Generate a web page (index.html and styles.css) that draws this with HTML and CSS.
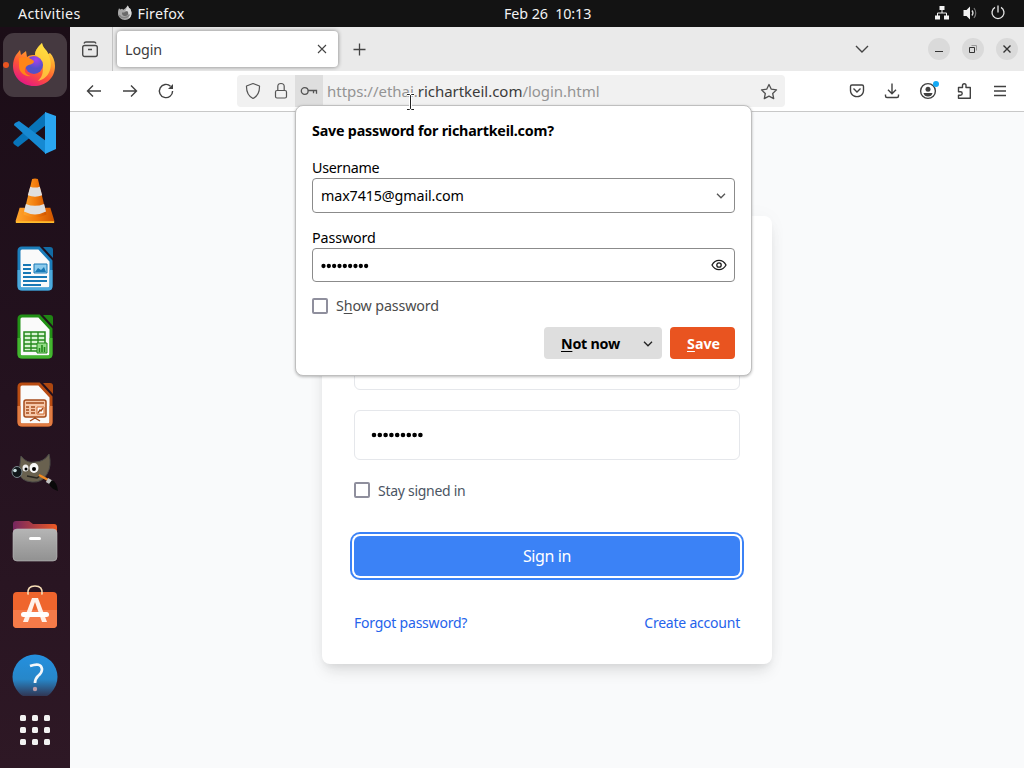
FILE: index.html
```html
<!DOCTYPE html>
<html lang="en">
<head>
<meta charset="utf-8">
<title>Login</title>
<link rel="stylesheet" href="styles.css">
</head>
<body>
<div class="desktop">
  <header class="topbar">
    <div class="top-left">
      <span class="t-activities">Activities</span>
      <svg class="mini-fox" width="16" height="16" viewBox="0 0 16 16"><path d="M2 3.2 3.4 4.6 5 3.8 6.3 4.7 8.4 3.2 10.8.6 12 3l1.5 1 1 3.5c.3 4.5-2.7 7.4-6.5 7.4S1 12 1 8.2c0-2 .4-3.500 1-5z" fill="#a8a8a8"/><path d="M10.800.6 12 3l1.500 1 1 3.500c.2 3-1 5-3 6.300 1-4 0-6-3.100-8z" fill="#d8d8d8"/><path d="M5 7.500c2.500.5 3-1 5-1.500 2 1 1.500 5-1.500 5S5 9.500 5 7.500z" fill="#6a6a6a"/><path d="M2.200 10c2 3.800 8 4 10.300-.5" fill="none" stroke="#858585" stroke-width="1.500"/></svg>
      <span class="t-firefox">Firefox</span>
    </div>
    <span class="t-clock">Feb 26&nbsp; 10:13</span>
    <div class="top-right">
      <svg width="16" height="16" viewBox="0 0 16 16" fill="#f2f2f2"><path d="M5.500 1h5v4h-5zM1 10.500h5v4H1zM10 10.500h5v4h-5z"/><path d="M8 5v3M3.500 11V8h9v3" fill="none" stroke="#f2f2f2"/></svg>
      <svg width="16" height="16" viewBox="0 0 16 16" fill="none"><path d="M1.500 5h3L8 1.500v13L4.500 11h-3z" fill="#f2f2f2"/><path d="M10 5.500q2 2.500 0 5" stroke="#ddd" stroke-width="1.300"/><path d="M12 3q3.500 5 0 10" stroke="#777" stroke-width="1.200"/></svg>
      <svg width="16" height="16" viewBox="0 0 16 16" fill="none" stroke="#e8e8e8" stroke-width="1.300"><path d="M5 2.400a6 6 0 1 0 6 0M8 .5v7"/></svg>
    </div>
  </header>
  <div class="workspace">
    <nav class="dock">
      <div class="dock-list">
        <div class="dock-item"><div class="dock-active"><i class="running"></i>
          <svg width="44" height="46" viewBox="0 0 44 46"><defs><linearGradient id="ff" x1=".85" y1="0" x2=".3" y2="1"><stop offset="0" stop-color="#fff44f"/><stop offset=".35" stop-color="#ffa22c"/><stop offset=".65" stop-color="#ff5436"/><stop offset="1" stop-color="#e31587"/></linearGradient><radialGradient id="fp" cx=".6" cy=".2"><stop offset="0" stop-color="#a940ef"/><stop offset="1" stop-color="#5450c8"/></radialGradient></defs>
          <path d="M3 15 7 10l1 5 5-4 1 6c3-2 5-2 8-2 0-5 4-9 7-12 1 6 5 6 6 11l2-1c3 3 5 8 5 13 0 12-9 20-21 20S0 37 0 26c0-4 1-8 3-11z" fill="url(#ff)"/><path d="M29 3c1 6 5 6 7 13 5 12-1 23-11 25 8-7 6-21-3-26 0-5 3-8 7-12z" fill="#ffdf40" opacity=".75"/><circle cx="21" cy="25" r="9" fill="url(#fp)"/><path d="M6 18c5-2 10-1 15 3 0 4-6 3-8 6-3 4 0 8 5 9-7 1-12-4-12-10z" fill="#ff8518"/></svg>
        </div></div>
        <div class="dock-item"><svg width="44" height="44" viewBox="0 0 44 44"><path d="M1 30q-2 2 1 4l3 2L33 14V1L1 30z" fill="#0874b9"/><path d="m2 12 4-2 27 20v13L2 15q-2-1 0-3z" fill="#1689d2"/><path d="M32 1 43 5v33l-11 5z" fill="#2aa6f1"/></svg></div>
        <div class="dock-item"><svg width="42" height="46" viewBox="0 0 42 48"><defs><linearGradient id="vc"><stop stop-color="#ffa52d"/><stop offset=".55" stop-color="#f17b0c"/><stop offset="1" stop-color="#cf5500"/></linearGradient></defs><path d="M5 31h32l4 13v2H1v-2z" fill="url(#vc)"/><path d="M1 45h40v2H1z" fill="#ffbc2e"/><path d="M18 1q3-1 6 0l9 37q-12 6-24 0z" fill="url(#vc)"/><path d="m16 9-2.500 9q7.500 3 15 0L26 9q-5 2-10 0zM11.500 27 9.500 35q11.500 6 23 0L30.500 27q-9.500 4-19 0z" fill="#e0e0e0"/></svg></div>
        <div class="dock-item"><svg width="38" height="46" viewBox="0 0 38 46"><path d="M6 2h17l12 13v25q0 3-3 3H6q-3 0-3-3V5q0-3 3-3z" fill="#fafafa" stroke="#1b7dba" stroke-width="3"/><path d="M3 24v16q0 3 3 3h26q3 0 3-3V24" fill="none" stroke="#4ca9dc" stroke-width="3"/><path d="M27 1h7q3 0 3 3v8z" fill="#126ca5"/><path d="M7 19h8M7 23h8M7 27h8M7 31h24M7 35h24M7 39h18" stroke="#1878b5" stroke-width="2"/><path d="M18 18h13v9H18z" fill="#8bcbed" stroke="#1878b5"/><path d="m19 26 3-4 3 2 3-3 2 5z" fill="#1878b5"/></svg></div>
        <div class="dock-item"><svg width="38" height="46" viewBox="0 0 38 46"><path d="M6 2h17l12 13v25q0 3-3 3H6q-3 0-3-3V5q0-3 3-3z" fill="#fafafa" stroke="#229116" stroke-width="3"/><path d="M3 24v16q0 3 3 3h26q3 0 3-3V24" fill="none" stroke="#43b52f" stroke-width="3"/><path d="M27 1h7q3 0 3 3v8z" fill="#208414"/><path d="M8 18h21v19H8z" fill="#d8f4d2" stroke="#23881b" stroke-width="1.500"/><path d="M15 18v19M22 18v19M8 22h21M8 26h21M8 30h21M8 34h21" stroke="#23881b" stroke-width="1.300"/><path d="M21 29h10v10H21z" fill="#90dc84" stroke="#23881b"/><path d="M23.500 38v-4M26 38v-7M28.500 38v-5" stroke="#23881b" stroke-width="1.600"/></svg></div>
        <div class="dock-item"><svg width="38" height="46" viewBox="0 0 38 46"><path d="M6 2h17l12 13v25q0 3-3 3H6q-3 0-3-3V5q0-3 3-3z" fill="#fafafa" stroke="#b94c12" stroke-width="3"/><path d="M3 24v16q0 3 3 3h26q3 0 3-3V24" fill="none" stroke="#e17c43" stroke-width="3"/><path d="M27 1h7q3 0 3 3v8z" fill="#ad4710"/><rect x="8" y="18" width="22" height="17" rx="2" fill="#f6c8a9" stroke="#a54b1b" stroke-width="1.500"/><path d="M10 21h18M10 25h3M10 28h3M10 31h3M15 25h4M15 28h4M15 31h4" stroke="#a54b1b" stroke-width="1.500"/><path d="M21 25h7v7h-7z" fill="#fff" stroke="#cf662b"/><path d="m22 31 2-3 1 1 2-3M19 35v2m-5 2 5-3 5 3" fill="none" stroke="#a54b1b" stroke-width="1.400"/></svg></div>
        <div class="dock-item"><svg width="48" height="44" viewBox="0 0 48 44"><path d="M10 5q6 8 14 6 9 0 14-8 3 12-2 20-5 9-15 8-12-1-13-10z" fill="#69614f" stroke="#4b4a47"/><ellipse cx="6" cy="21" rx="5" ry="5.500" fill="#101619" stroke="#79868c"/><circle cx="4" cy="19.500" r="1.800" fill="#cce0e2"/><ellipse cx="14.500" cy="17" rx="3" ry="3.500" fill="#eee"/><ellipse cx="23" cy="17" rx="4.500" ry="5" fill="#f7f7f7"/><circle cx="15" cy="18" r="1.500"/><circle cx="23" cy="18" r="2"/><path d="m16 25 10 2 4-3" fill="none" stroke="#292721" stroke-width="1.500"/><path d="m28 24 11 6" stroke="#f08a22" stroke-width="2.500"/><path d="m36 29 5 3" stroke="#c2c2c2" stroke-width="4.500"/><path d="M41 29q5 2 6 11-7-2-9-7z" fill="#090909"/></svg></div>
        <div class="dock-item"><svg width="46" height="42" viewBox="0 0 46 42"><defs><linearGradient id="fo"><stop stop-color="#75265f"/><stop offset="1" stop-color="#ed5a24"/></linearGradient><linearGradient id="fg" x2="0" y2="1"><stop stop-color="#b5b5b5"/><stop offset="1" stop-color="#919191"/></linearGradient></defs><path d="M1 12V4q0-3 3-3h13l4 3h21q3 0 3 3v8z" fill="url(#fo)"/><rect x="1" y="9" width="44" height="32" rx="4" fill="url(#fg)" stroke="#bcbcbc" stroke-width=".6"/><rect x="17" y="17" width="12" height="3" rx="1.500" fill="#fff"/></svg></div>
        <div class="dock-item store"><svg width="46" height="44" viewBox="0 0 46 44"><rect x="1" y="7" width="44" height="36" rx="4" fill="#ef652d"/><path d="M1 25h44v14q0 4-4 4H5q-4 0-4-4z" fill="#f57b49"/><path d="M16 9Q15 1 23 1t7 8" fill="none" stroke="#f9dfb7" stroke-width="1.700" stroke-linecap="round"/><path d="M11 37 20 13h6l9 24h-5l-7-20-7 20z" fill="#fff1e9"/><rect x="9" y="27" width="28" height="5" rx="2.500" fill="#fff"/></svg></div>
        <div class="dock-item"><svg width="46" height="46" viewBox="0 0 46 46"><defs><linearGradient id="he" x2="0" y2="1"><stop stop-color="#2490df"/><stop offset=".55" stop-color="#2787c9"/><stop offset=".95" stop-color="#31304b"/></linearGradient></defs><circle cx="23" cy="23" r="22.500" fill="url(#he)"/><path d="M18 12q11-4 12 3 0 4-4 7-3 3-3 7" fill="none" stroke="#f4f7fa" stroke-width="2.700"/><circle cx="23" cy="35" r="2.200" fill="#bc9ba6"/></svg></div>
      </div>
      <div class="apps"><i></i><i></i><i></i><i></i><i></i><i></i><i></i><i></i><i></i></div>
    </nav>
    <main class="browser">
      <div class="tabbar">
        <div class="view"><svg width="18" height="18" viewBox="0 0 18 18" fill="none" stroke="#4a4a4a" stroke-width="1.400"><rect x="1.700" y="5.500" width="14.600" height="11" rx="2"/><path d="M3 3.500Q3.500 2 5 2h8q1.500 0 2 1.500M7 9.500h4"/></svg></div>
        <div class="tab"><span class="t-login">Login</span><svg width="10" height="10" viewBox="0 0 10 10" stroke="#444" stroke-width="1.100"><path d="m1 1 8 8M9 1 1 9"/></svg></div>
        <svg class="newtab" width="13" height="13" viewBox="0 0 13 13" stroke="#444" stroke-width="1.300"><path d="M6.500.5v12M.5 6.500h12"/></svg>
        <svg class="alltabs" width="14" height="8" viewBox="0 0 14 8" fill="none" stroke="#444" stroke-width="1.400"><path d="m1 1 6 6 6-6"/></svg>
        <div class="winbtns">
          <b><svg width="10" height="10" viewBox="0 0 10 10" stroke="#333"><path d="M1 7.500h8"/></svg></b>
          <b><svg width="10" height="10" viewBox="0 0 10 10" fill="none" stroke="#333"><path d="M1.500 3.500h5v5h-5z"/><path d="M3.500 1.500h5v5" stroke="#999"/></svg></b>
          <b><svg width="10" height="10" viewBox="0 0 10 10" stroke="#333" stroke-width="1.400"><path d="m1.500 1.500 7 7M8.500 1.500l-7 7"/></svg></b>
        </div>
      </div>
      <div class="toolbar">
        <div class="navbtns">
          <svg width="16" height="16" viewBox="0 0 16 16" fill="none" stroke="#414141" stroke-width="1.400"><path d="M15 8H1.500M7 2.500 1.500 8 7 13.500"/></svg>
          <svg width="16" height="16" viewBox="0 0 16 16" fill="none" stroke="#414141" stroke-width="1.400"><path d="M1 8h13.500M9 2.500 14.500 8 9 13.500"/></svg>
          <svg width="16" height="16" viewBox="0 0 16 16" fill="none" stroke="#414141" stroke-width="1.400"><path d="M12.500 3.200A6.600 6.600 0 1 0 14.600 8"/><path d="M15 1v5h-5z" fill="#414141" stroke="none"/></svg>
        </div>
        <div class="urlbar">
          <svg class="shield" width="16" height="18" viewBox="0 0 16 18" fill="none" stroke="#555" stroke-width="1.200"><path d="M8 1.500 14.500 4q.3 9-6.500 12.500Q1.200 13 1.500 4z" stroke-linejoin="round"/></svg>
          <svg class="lock" width="14" height="18" viewBox="0 0 14 18" fill="none" stroke="#555" stroke-width="1.200"><rect x="1.500" y="8.500" width="11" height="7.500" rx="1.500"/><path d="M3.800 8V4.500q0-3 3.200-3t3.200 3V8"/></svg>
          <div class="keybox"><svg width="18" height="12" viewBox="0 0 18 12" fill="none" stroke="#555" stroke-width="1.300"><circle cx="4.700" cy="6" r="3.400"/><path d="M8 5.500h8.500v3.300M13.500 5.500v2.700"/></svg></div>
          <div class="url"><span class="u1">https://ethai.</span><span class="u2">richartkeil.com</span><span class="u3">/login.html</span></div>
          <svg class="star" width="18" height="17" viewBox="0 0 18 17" fill="none" stroke="#505050" stroke-width="1.300"><path d="m9 1.500 2.300 4.700 5.200.7-3.800 3.600 1 5.100L9 13.200l-4.700 2.400 1-5.100L1.500 6.900l5.200-.7z" stroke-linejoin="round"/></svg>
        </div>
        <div class="tools">
          <svg width="16" height="16" viewBox="0 0 16 16" fill="none" stroke="#414141" stroke-width="1.400"><path d="M3 2h10q1.500 0 1.500 1.500V7.500q0 3.500-3.500 5.500-3 1.300-6 0Q1.500 11 1.500 7.500V3.500Q1.500 2 3 2z"/><path d="m4.500 5.500 3.500 3.500 3.500-3.500"/></svg>
          <svg width="16" height="16" viewBox="0 0 16 16" fill="none" stroke="#414141" stroke-width="1.400"><path d="M8 .5v10M4 6.700l4 4 4-4M1.500 11.500V13q0 1.500 1.500 1.500h10q1.500 0 1.500-1.500v-1.500"/></svg>
          <svg class="account" width="20" height="20" viewBox="0 0 20 20"><circle cx="10" cy="10" r="7.400" fill="none" stroke="#414141" stroke-width="1.400"/><circle cx="10" cy="8.300" r="2.500" fill="#414141"/><path d="M5.500 12h9q-.8 3.500-4.500 3.500T5.500 12z" fill="#414141"/><circle cx="18" cy="3" r="3" fill="#15aaf5"/></svg>
          <svg width="16" height="18" viewBox="0 0 16 18" fill="none" stroke="#414141" stroke-width="1.400"><path d="M2.500 5.500h4V3.500q0-1.800 1.800-1.800T10 3.500v2h4.300v10.700H2.500v-3h2q1.700 0 1.700-1.700T4.500 9.800h-2z" stroke-linejoin="round"/></svg>
          <svg width="12" height="12" viewBox="0 0 12 12" stroke="#414141" stroke-width="1.300"><path d="M0 1.500h12M0 6h12M0 10.500h12"/></svg>
        </div>
      </div>
      <div class="page">
        <section class="card">
          <div class="field"></div>
          <div class="field pass"><svg width="52" height="6" viewBox="0 0 52 6"><path class="dots-big" d="M3 3h46.500"/></svg></div>
          <label class="stay"><i class="box"></i><span class="t-stay">Stay signed in</span></label>
          <div class="signin"><span class="t-sign">Sign in</span></div>
          <div class="links"><a class="t-forgot">Forgot password?</a><a class="t-create">Create account</a></div>
        </section>
      </div>
    </main>
  </div>
  <section class="popup">
    <h1 class="t-title">Save password for richartkeil.com?</h1>
    <div class="label"><span class="t-user">Username</span></div>
    <div class="input user"><span class="t-email">max7415@gmail.com</span><svg width="10" height="6" viewBox="0 0 10 6" fill="none" stroke="#555" stroke-width="1.300"><path d="m1 .8 4 4 4-4"/></svg></div>
    <div class="label second"><span class="t-pass">Password</span></div>
    <div class="input pw"><svg class="pwdots" width="48" height="6" viewBox="0 0 48 6"><path class="dots-small" d="M2.500 3h43"/></svg><svg width="16" height="12" viewBox="0 0 16 12" fill="none" stroke="#1c1c1c" stroke-width="1.300"><path d="M1 6q2.500-4.700 7-4.700T15 6q-2.500 4.700-7 4.700T1 6z"/><circle cx="8" cy="6" r="2.200"/></svg></div>
    <label class="show"><i class="box"></i><span class="t-show">S<u>h</u>ow password</span></label>
    <div class="actions">
      <div class="notnow"><span class="t-not"><u>N</u>ot now</span><svg width="10" height="6" viewBox="0 0 10 6" fill="none" stroke="#222" stroke-width="1.300"><path d="m1 .8 4 4 4-4"/></svg></div>
      <div class="save"><span class="t-save"><u>S</u>ave</span></div>
    </div>
  </section>
  <svg class="cursor" width="9" height="18" viewBox="0 0 9 18" fill="none"><path d="M1 1.500h2.500l1 1 1-1H8M4.500 2.500v13M1 16.500h2.500l1-1 1 1H8" stroke="#fff" stroke-width="3"/><path d="M1 1.500h2.500l1 1 1-1H8M4.500 2.500v13M1 16.500h2.500l1-1 1 1H8" stroke="#222"/></svg>
</div>
</body>
</html>
```

FILE: styles.css
```css
* { box-sizing: border-box; }
body { margin: 0; font: 14.3px/20px "Noto Sans", "Open Sans", sans-serif; color: #000; }
svg { display: block; flex: none; overflow: visible; }
span, a { white-space: nowrap; }
i { display: block; }
.desktop { position: relative; width: 1024px; height: 768px; overflow: hidden; display: flex; flex-direction: column; }
.topbar { height: 27px; background: #131313; color: #f2f2f2; display: grid; grid-template-columns: 504px 1fr auto; align-items: center; }
.top-left { display: flex; align-items: center; padding-left: 18px; }
.t-activities { letter-spacing: .3px; }
.t-firefox { letter-spacing: .2px; }
.t-clock { letter-spacing: -.08px; }
.mini-fox { margin: 0 5px 1px 36px; }
.top-right { display: flex; gap: 12px; padding: 0 18px 1px 0; }
.workspace { display: flex; height: 741px; }
.dock { width: 70px; background: linear-gradient(#1b0d17, #24121f 50%, #2e1825); }
.dock-list { height: 669px; padding-top: 4px; overflow: hidden; }
.dock-item { height: 68px; display: flex; align-items: center; justify-content: center; }
.store { padding-bottom: 5px; }
.dock-active { position: relative; width: 64px; height: 64px; border-radius: 11px; background: #453940; display: flex; align-items: center; justify-content: center; }
.dock-active svg { margin-top: -5px; }
.running { position: absolute; left: 0; top: 29px; width: 6px; height: 6px; border-radius: 3px; background: #e95420; }
.apps { display: grid; grid-template-columns: repeat(3, 6px); gap: 6px; width: 30px; margin: 19px auto 0; }
.apps i { width: 6px; height: 6px; border-radius: 1.5px; background: #f2f2f2; }
.browser { width: 954px; display: flex; flex-direction: column; }
.tabbar { height: 44px; background: #eaeaea; display: flex; align-items: center; }
.view { width: 43px; height: 44px; border-right: 1px solid #c4c4c4; display: flex; align-items: center; padding-left: 11px; }
.tab { width: 221px; height: 36px; margin-left: 4px; background: #fff; border-radius: 4px; box-shadow: 0 0 4px #0007; display: flex; align-items: center; justify-content: space-between; padding: 0 11px 0 8px; color: #3d3d3d; }
.t-login { letter-spacing: -.1px; padding-top: 2px; }
.newtab { margin: 1px 0 0 15px; }
.alltabs { margin-left: auto; }
.winbtns { display: flex; gap: 12px; margin: 0 6px 0 59px; }
.winbtns b { width: 22px; height: 22px; border-radius: 50%; background: #dadada; display: flex; align-items: center; justify-content: center; }
.toolbar { height: 41px; background: #fff; border-bottom: 1px solid #c8c8c8; display: flex; align-items: center; }
.navbtns { display: flex; gap: 20px; margin-left: 16px; width: 151px; }
.urlbar { width: 548px; height: 32px; background: #f1f1f1; border-radius: 4px; display: flex; align-items: center; padding: 0 7px 0 8px; }
.lock { margin: 0 7px 0 13px; }
.keybox { width: 28px; height: 32px; background: #dedede; display: flex; align-items: center; justify-content: center; }
.url { display: flex; margin-left: 4px; font-size: 15px; color: #949494; letter-spacing: -.03px; }
.u2 { color: #3b3b3b; }
.star { margin-left: auto; }
.tools { display: flex; align-items: center; gap: 19px; margin: 0 18px 0 auto; }
.tools svg:last-child { margin-left: 3px; }
.account { margin: 0 -1px; }
.page { height: 656px; background: #f9fafb; padding: 104px 0 0 252px; }
.card { width: 450px; height: 448px; border-radius: 8px; background: #fff; padding: 124px 32px 0; box-shadow: 0 10px 15px -3px #0000001a, 0 4px 6px -2px #0000000d, 0 0 20px #00000008; }
.field { height: 50px; border: 1px solid #e5e7eb; border-radius: 6px; display: flex; align-items: center; padding-left: 16px; }
.pass { margin-top: 20px; }
.dots-big, .dots-small { fill: none; stroke: #000; stroke-linecap: round; }
.dots-big { stroke-width: 4.6px; stroke-dasharray: 0 5.8; }
.dots-small { stroke-width: 4.3px; stroke-dasharray: 0 5.33; }
.pwdots { margin-top: 1px; }
.stay, .show { display: flex; align-items: center; gap: 8px; }
.stay { margin-top: 20px; color: #4b5563; }
.t-stay, .links { font-size: 14px; }
.t-stay { letter-spacing: -.28px; padding-top: 1px; margin-bottom: -1px; }
.box { width: 16px; height: 16px; border: 2px solid #8f8f9d; border-radius: 2px; background: #fff; }
.signin { height: 40px; margin-top: 36px; border-radius: 6px; background: #3b82f6; box-shadow: 0 0 0 2px #fff, 0 0 0 4px #3b82f6; color: #fff; display: flex; align-items: center; justify-content: center; font-size: 16px; letter-spacing: -.4px; }
.links { display: flex; justify-content: space-between; margin-top: 37px; color: #2563eb; letter-spacing: -.22px; }
.popup { position: absolute; left: 295px; top: 105px; width: 457px; height: 271px; padding: 15px 16px 0; background: #fff; border: 1px solid #bfbfbf; border-radius: 8px; box-shadow: 0 1px 3px #0004; }
.popup h1 { margin: 0; font-size: 14.3px; line-height: 20px; white-space: nowrap; letter-spacing: -.21px; }
.label { height: 20px; margin-top: 17px; }
.second { margin-top: 15px; }
.t-user { letter-spacing: -.27px; }
.t-email { letter-spacing: -.12px; }
.t-pass { letter-spacing: -.12px; }
.t-show { letter-spacing: -.15px; }
.t-not { letter-spacing: -.25px; }
.input { width: 423px; height: 35px; border: 1px solid #8b8b8b; border-radius: 4px; display: flex; align-items: center; justify-content: space-between; padding: 0 8px; }
.pw { height: 34px; padding-right: 7.5px; }
.show { margin-top: 14px; color: #4b4b4b; }
.actions { display: flex; gap: 8px; justify-content: flex-end; margin: 11px 0 0; width: 423px; font-weight: 700; }
.notnow { width: 118px; height: 32px; background: #dedede; border-radius: 4px; display: flex; align-items: center; justify-content: space-between; padding: 1px 9px 0 17px; }
.t-not, .t-save { padding-top: 1px; }
.save { width: 65px; height: 32px; background: #e95420; color: #fff; border-radius: 4px; display: flex; align-items: center; padding: 1px 0 0 17px; }
u { text-underline-offset: 2px; }
.cursor { position: absolute; left: 406px; top: 93px; }
```
